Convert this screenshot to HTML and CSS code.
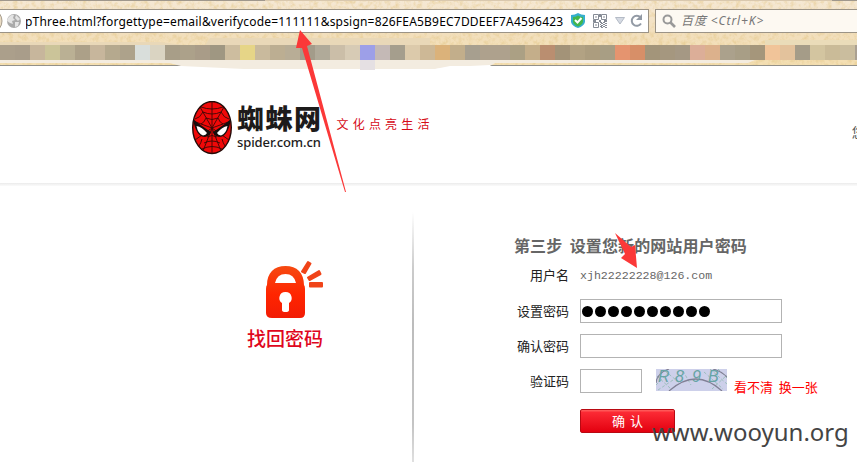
FILE: index.html
```html
<!DOCTYPE html>
<html lang="zh-CN">
<head>
<meta charset="utf-8">
<title>找回密码</title>
<link rel="stylesheet" href="styles.css">
</head>
<body>
<div class="chrome">
  <svg class="parchment" width="857" height="71" viewBox="0 0 857 71" aria-hidden="true">
    <defs>
      <linearGradient id="paper" x1="0" y1="0" x2="0" y2="1"><stop offset="0" stop-color="#f5e8d4"/><stop offset=".5" stop-color="#f2dfbd"/><stop offset="1" stop-color="#f4dfb2"/></linearGradient>
      <filter id="grain" x="0" y="0" width="100%" height="100%"><feTurbulence type="fractalNoise" baseFrequency=".22" numOctaves="3" seed="4"/><feColorMatrix values="0 0 0 0 .77  0 0 0 0 .57  0 0 0 0 .25  1.8 0 0 0 -.75"/></filter>
    </defs>
    <rect width="857" height="66" fill="url(#paper)"/>
    <rect width="857" height="66" filter="url(#grain)" opacity=".75"/>
    <rect width="857" height="1" fill="#9f978c"/>
    <rect x="265" width="567" height="1" fill="#d9c8ae"/>
    <path d="M0 42H160L183 45H0zM210 38H430V45H205z" fill="#e9d8b8"/>
    <path d="M765 40H857V45H765z" fill="#eadcb9"/>
    <path d="M0 60H755L748 63H0z" fill="#f4ecdf"/>
    <path d="M0 65.500H182M490 65.500H857" stroke="#929089"/>
    <path d="M158 60H500L490 66H450L435 69H244L181 66z" fill="#f3ece0"/>
    <path d="M435 69L450 67L490 65V66H857V71H435z" fill="#fff"/>
    <rect x="360" y="60" width="15" height="10" fill="#e5e0e3"/>
  </svg>
  <div class="toolbar">
    <div class="address">
      <svg class="back" width="3" height="22"><ellipse cx="-6" cy="11" rx="8" ry="10" fill="#eadcc4" stroke="#a69c8d"/></svg>
      <svg class="globe" width="16" height="16" viewBox="0 0 16 16"><circle cx="8" cy="8" r="7" fill="#aaa"/><path d="M2 5Q5 1 8 2L7 5L9 7L6 8L7 11L4 10L1 8zM10 2L14 6L12 8L9 5zM9 9L13 9L12 13L9 14z" fill="#e4e4e4"/></svg>
      <div class="url"><span>pThree.html?forgettype=email&amp;verifycode=111111&amp;spsign=826FEA5B9EC7DDEEF7A4596423</span></div>
      <svg class="tools" width="75" height="16" viewBox="0 0 75 16">
        <path d="M1 2Q5 2 8 0Q11 2 15 2V9Q14 13 8 15Q2 13 1 9z" fill="#35aecd"/><path d="M3 4Q6 4 8 2.500Q10 4 13 4V9Q12 12 8 13.500Q4 12 3 9z" fill="#42b64c"/><path d="M5 7L7.500 9.500L11.500 5" fill="none" stroke="#fff" stroke-width="2"/>
        <g transform="translate(23 1)" fill="none" stroke="#858b95"><path d="M.5.5H5.500V5.500H.5zM8.500.5H13.500V5.500H8.500zM.5 8.500H5.500V13.500H.5z"/><path d="M2.500 3H3.500M10.500 3H11.500M2.500 11H3.500M7 0V3M6 7H8M0 7H3M11 7H14" stroke-width="2"/><path d="M7 8.500H9M10 8.500H12M8 9.500H10M12 9.500H14M7 10.500H8M10 10.500H12M8 11.500H10M12 11.500H14M7 12.500H9M10 12.500H12M8 13.500H10M12 13.500H14"/></g>
        <path d="M45.500 4.500H54.500L50 11z" fill="#d5dae3" stroke="#b4bbc6"/>
        <path d="M70.500 4.500A5 5 0 1 0 71 10.500" fill="none" stroke="#929aa5" stroke-width="2"/><path d="M72 1V7H66z" fill="#929aa5"/>
      </svg>
    </div>
    <div class="search">
      <svg width="15" height="15" viewBox="0 0 15 15"><circle cx="5.500" cy="5.500" r="4" fill="none" stroke="#999" stroke-width="2"/><path d="M8.500 8.500L13 13" stroke="#999" stroke-width="2.600"/></svg>
      <span>百度 &lt;Ctrl+K&gt;</span>
    </div>
  </div>
  <div class="bookmarks"></div>
</div>

<header class="site">
  <svg class="mask" width="40" height="54" viewBox="0 0 40 54">
    <ellipse cx="20" cy="26.500" rx="19.300" ry="26" fill="#f00808" stroke="#220b08" stroke-width="1.400"/>
    <g fill="none" stroke="#3a0906" stroke-width=".9"><path d="M20 1V53M20 27L8 6M20 27L32 6M20 27L1 20M20 27L39 20M20 27L3 39M20 27L37 39M20 27L11 50M20 27L29 50"/><path d="M14 17Q20 20 26 17Q28 22 31 23M14 17Q12 22 9 23M11 11Q20 15 29 11Q32 17 37 18M11 11Q8 17 3 18M9 6Q20 10 31 6M15 36Q20 33 25 36M12 42Q20 38 28 42M10 48Q20 43 30 48M10 38Q9 42 7 45M30 38Q31 42 33 45"/></g>
    <path d="M1 18Q8 24 19 31Q18 35 13 36Q4 36 1 18zM39 18Q32 24 21 31Q22 35 27 36Q36 36 39 18z" fill="#160f0e"/>
    <path d="M4.500 25Q10 26 15 32Q14 34 11 34.500Q6 33 4.500 25zM35.500 25Q30 26 25 32Q26 34 29 34.500Q34 33 35.500 25z" fill="#fff"/>
  </svg>
  <div class="brand"><strong>蜘蛛网</strong><span>spider.com.cn</span></div>
  <div class="slogan">文化点亮生活</div>
  <div class="greeting">您</div>
</header>

<main>
  <section class="side">
    <svg width="60" height="60" viewBox="0 0 60 60">
      <defs><linearGradient id="lock" x1="0" y1="0" x2="0" y2="1"><stop offset="0" stop-color="#f64a11"/><stop offset=".55" stop-color="#ff2500"/><stop offset="1" stop-color="#f21c05"/></linearGradient></defs>
      <path fill-rule="evenodd" d="M3 25C3 13 10 6 21.500 6S40 13 40 25Q41 26 41 29V53Q41 58 36 58H8Q2 58 2 53V29Q2 26 3 25zM11 23H32Q30 14 21.500 14T11 23z" fill="url(#lock)"/>
      <path d="M21.500 32A6 6 0 0 0 18 43V50Q18 52 21.500 52T25 50V43A6 6 0 0 0 21.500 32z" fill="#fff"/>
      <g fill="#f04419" stroke="#f04419" stroke-width="2" stroke-linejoin="round"><path d="M38 11.500L44 2L46.500 3.500L41 13zM44 17.500L55 11L56.500 14L45.500 20zM46 23H58V26.500H46z"/></g>
    </svg>
    <h1>找回密码</h1>
  </section>
  <div class="divider"></div>
  <form class="reset">
    <h2>第三步&nbsp; 设置您新的网站用户密码</h2>
    <div class="row user"><label>用户名</label><span class="email">xjh22222228@126.com</span></div>
    <div class="row"><label>设置密码</label><div class="field dots"><i></i><i></i><i></i><i></i><i></i><i></i><i></i><i></i><i></i><i></i></div></div>
    <div class="row"><label>确认密码</label><div class="field"></div></div>
    <div class="row"><label>验证码</label><div class="field short"></div>
      <svg class="captcha" width="71" height="22" viewBox="0 0 71 22"><rect width="71" height="22" fill="#cdd0ea"/><path d="M0 16L12 4M2 21L20 9M9 2L25 15M48 3L67 20M54 0L71 15M56 20L71 6M27 2L35 16M1 7L15 20M62 0L71 9" stroke="#9dbfbd" stroke-dasharray="3 2"/><path d="M13 22Q40 -2 66 22M0 14Q1 4 13 0M57 0Q65 2 71 8" fill="none" stroke="#807f94" stroke-width="1.200"/><text x="2" y="13">R</text><text x="19" y="13">8</text><text x="36" y="13">9</text><text x="52" y="13">B</text></svg>
      <span class="refresh">看不清&nbsp; 换一张</span></div>
    <button type="button">确 认</button>
  </form>
</main>

<svg class="arrows" width="857" height="462" viewBox="0 0 857 462" aria-hidden="true"><path d="M300 30L312 44L307 46L346 192H345L302 48L296 48zM615 233L631 247L635 245L637 268L621 258L625 254z" fill="#fb3838"/></svg>
<div class="watermark">www.wooyun.org</div>
</body>
</html>
```
FILE: styles.css
```css
* { box-sizing: border-box; }
body { margin: 0; width: 857px; height: 462px; overflow: hidden; position: relative; background: #fff; font-family: "Liberation Sans", "Noto Sans CJK SC", sans-serif; }
svg { display: block; flex: none; }
.chrome { height: 66px; position: relative; z-index: 0; padding-top: 9px; }
.parchment { position: absolute; left: 0; top: 0; z-index: -1; }
.toolbar { display: flex; gap: 6px; height: 24px; }
.address { width: 649px; border: 1px solid #9b9386; border-left: 0; background: #fff; display: flex; align-items: center; overflow: hidden; }
.globe { margin-left: 3px; }
.url { margin-left: 4px; width: 538px; height: 22px; overflow: hidden; white-space: nowrap; font: 12px/23px "Noto Sans", sans-serif; letter-spacing: .2px; color: #000; }
.url span { display: inline-block; margin-left: -1px; }
.tools { margin-left: 6px; }
.search { flex: 1; border: 1px solid #9b9386; border-right: 0; background: #fdf9f2; display: flex; align-items: center; padding-left: 6px; gap: 4px; font: italic 12px/22px "Noto Sans", "Noto Sans CJK SC", sans-serif; letter-spacing: .9px; color: #777; }
.bookmarks { height: 15px; margin-top: 12px; background: linear-gradient(90deg, #ab9f8b 0 15px, #a99d8a 0 30px, #c7b69c 0 45px, #cbc499 0 60px, #bab094 0 75px, #aca088 0 90px, #c7b69c 0 105px, #b5a98e 0 120px, #ada28b 0 135px, #d9dedb 0 150px, #dad4c2 0 165px, #a89e88 0 180px, #aca18a 0 195px, #a99c88 0 210px, #9f9782 0 225px, #cdbd9f 0 240px, #e6d587 0 255px, #c9ba9d 0 270px, #bcae92 0 285px, #b8ad96 0 300px, #a39c8a 0 315px, #b0aa99 0 330px, #cbbea8 0 345px, #d7cbb5 0 360px, #9d9fe8 0 375px, #c4b9b6 0 390px, #a59e8d 0 405px, #dccaab 0 420px, #cdb896 0 435px, #dbb27a 0 450px, #c2ae8b 0 465px, #a79f8f 0 480px, #aea18d 0 510px, #aba084 0 525px, #c4ae8a 0 540px, #ba8e70 0 555px, #a39378 0 570px, #b2a283 0 585px, #ac9d7f 0 600px, #a89e84 0 615px, #e5946f 0 630px, #d78f68 0 645px, #a3957a 0 660px, #a5977f 0 675px, #a59884 0 690px, #dcae98 0 705px, #dcb18c 0 720px, #aba18c 0 735px, #a89e86 0 750px, #a5967b 0 765px, #f1c499 0 780px, #e3c29c 0 795px, #a59c88 0 810px, #d3c5a0 0 825px, #cabb98 0 840px, #cabd9e 0 855px, #aaa091 0); }
.site { height: 120px; display: flex; padding: 35px 0 0 192px; background: linear-gradient(#fff 117px, #eaeaea 117px, #f1f1f1 118px, #fafafa 120px); }
.brand { width: 86px; margin-left: 5px; color: #1d1b1b; }
.brand strong, .brand span { display: block; white-space: nowrap; }
.brand strong { font: 900 27px/34px "Noto Sans CJK SC", sans-serif; letter-spacing: 1.5px; }
.brand span { font: 500 13px/14px "Noto Sans", sans-serif; letter-spacing: -.1px; }
.slogan { margin: 14px 0 0 14px; width: 100px; font: 12px/18px "Noto Sans CJK SC", sans-serif; letter-spacing: 4.2px; color: #d60c18; white-space: nowrap; }
.greeting { margin: 22px 0 0 418px; font: 13px/18px "Noto Sans CJK SC", sans-serif; color: #555; }
main { display: flex; height: 276px; }
.side { width: 412px; padding: 74px 0 0 264px; }
.side h1 { margin: 6px 0 0 -17px; font: 500 19px/24px "Noto Sans CJK SC", sans-serif; color: #df0620; white-space: nowrap; }
.divider { width: 2px; height: 250px; margin-top: 26px; background: linear-gradient(#fff, #ccc 22%, #bcbcbc 45%, #c4c4c4 85%, #e0e0e0); }
.reset { padding: 48px 0 0 96px; }
.reset h2 { margin: 0 0 0 4px; font: bold 16px/22px "Noto Sans CJK SC", sans-serif; letter-spacing: .1px; color: #666; white-space: nowrap; }
.row { display: flex; height: 24px; margin-bottom: 11px; }
.row.user { margin: 7px 0 12px; height: 24px; }
.row label { width: 59px; margin-right: 11px; font: 13px/24px "Noto Sans CJK SC", sans-serif; color: #222; text-align: right; white-space: nowrap; }
.email { font: 11.6px/26px "Liberation Mono", monospace; color: #666; }
.field { width: 202px; height: 24px; border: 1px solid #b3b3b3; background: #fff; }
.field.short { width: 62px; }
.dots { display: flex; align-items: center; gap: 2px; padding-left: 1px; }
.dots i { width: 11px; height: 11px; border-radius: 50%; background: #000; }
.captcha { margin-left: 14px; }
.captcha text { font: italic 16px "Liberation Sans", sans-serif; fill: #67a4a5; }
.refresh { margin: 6px 0 0 7px; font: 13px/24px "Noto Sans CJK SC", sans-serif; color: #f00; white-space: nowrap; }
.reset button { display: block; margin: 16px 0 0 70px; padding: 0; width: 95px; height: 24px; border: 1px solid #b90912; border-radius: 2px; background: linear-gradient(#ff5757 0 1px, #fc2b35 2px, #e3000f); color: #fff; font: 13px/22px "Noto Sans CJK SC", sans-serif; word-spacing: 2px; }
.arrows { position: absolute; left: 0; top: 0; }
.watermark { position: absolute; left: 652px; top: 415px; font: 24px/34px "Noto Sans", sans-serif; color: #444; white-space: nowrap; }
```
